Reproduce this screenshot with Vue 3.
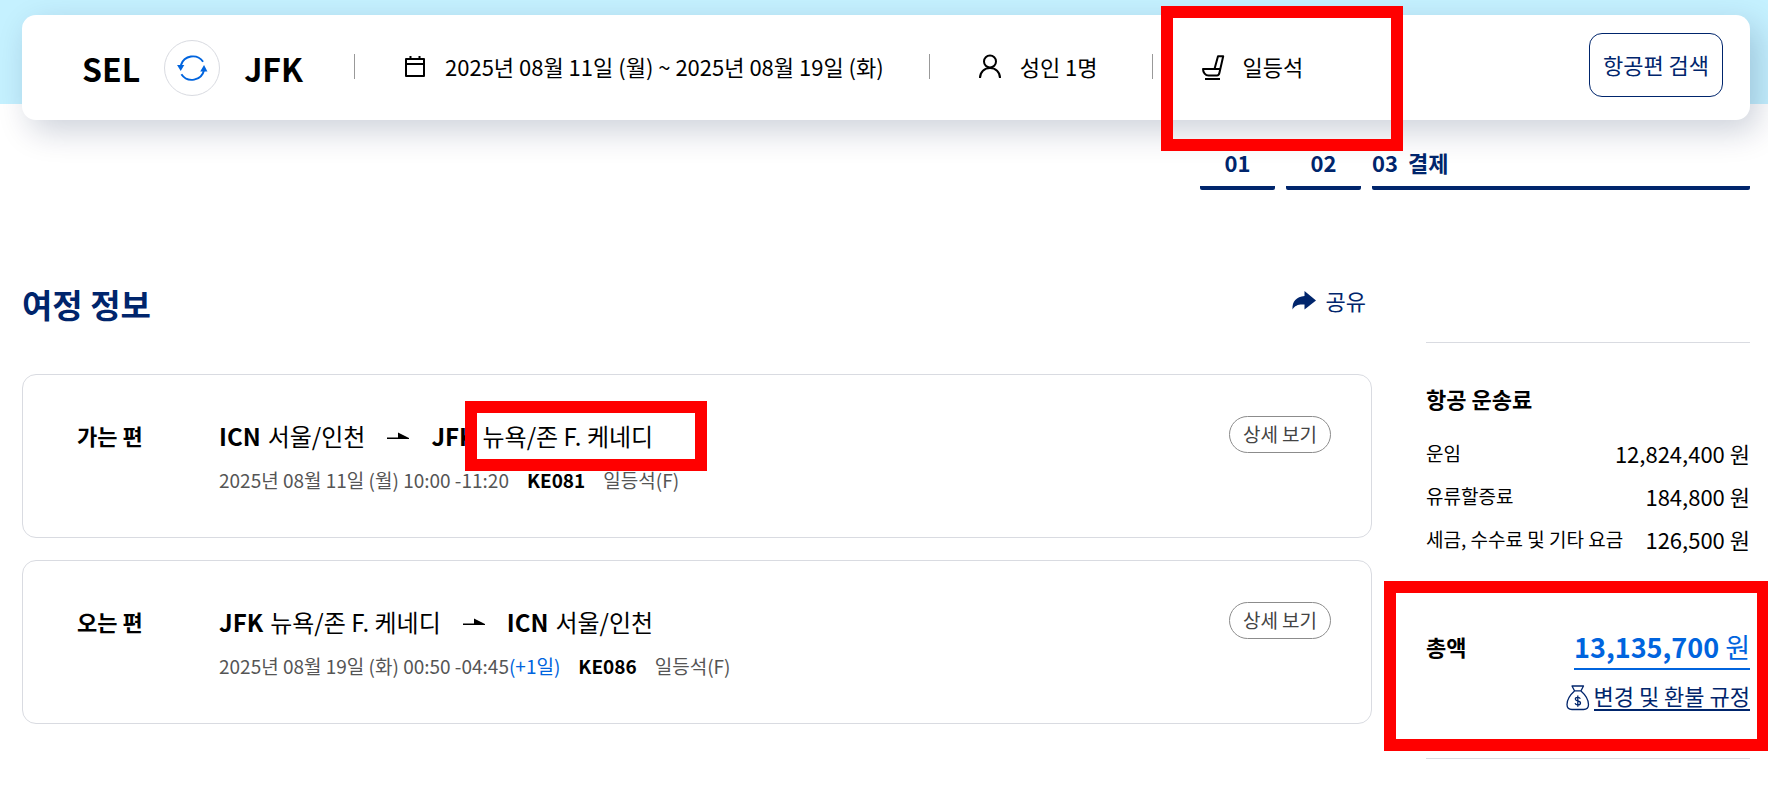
<template>
    <div class="page">
        <header class="hero">
            <div class="search-bar">
                <div class="route">
                    <span class="airport">SEL</span>
                    <button class="swap" type="button" aria-label="왕복">
                        <svg viewBox="0 0 56 56" fill="none">
                            <path d="M39.500 21.500A13 13 0 0 0 16.500 25" stroke="#0064de" stroke-width="2" />
                            <path d="M17 34.500A13 13 0 0 0 40.500 30" stroke="#0064de" stroke-width="2" />
                            <path d="M12.500 25h7.500l-3.700 6z" fill="#0064de" />
                            <path d="M36.500 31.500h7.500l-3.500-6.500z" fill="#0064de" />
                        </svg>
                    </button>
                    <span class="airport">JFK</span>
                </div>
                <div class="condition">
                    <svg class="icon" viewBox="0 0 24 24" fill="none" stroke="#000" stroke-width="2">
                        <path d="M3 4h18v17H3zM3 9h18M7.500 1V4M16.500 1V4" stroke-linejoin="round" />
                    </svg>
                    <span>2025년 08월 11일 (월) ~ 2025년 08월 19일 (화)</span>
                </div>
                <div class="condition passengers">
                    <svg class="icon" viewBox="0 0 24 24" fill="none" stroke="#000" stroke-width="2">
                        <circle cx="12" cy="6.500" r="6" />
                        <path d="M2 23c0-6 4.500-10 10-10s10 4 10 10" />
                    </svg>
                    <span>성인 1명</span>
                </div>
                <div class="condition">
                    <svg class="icon" viewBox="0 0 24 24" fill="none" stroke="#000" stroke-width="2">
                        <path d="M13.500 14L17 1.200h5.200L18.500 17.500c-.4 2-1 3-2.500 3H7.500C4.500 20.500 2 17.500 2 14h18" stroke-linejoin="round" />
                        <path d="M4 24h15" />
                    </svg>
                    <span>일등석</span>
                    <i class="mark mark-cabin"></i>
                </div>
                <button class="search-button" type="button">항공편 검색</button>
            </div>
        </header>

        <ol class="steps">
            <li>01</li>
            <li>02</li>
            <li class="current"><span>03</span><span>결제</span></li>
        </ol>

        <div class="content">
            <main>
                <div class="title-row">
                    <h1>여정 정보</h1>
                    <button class="share" type="button">
                        <svg viewBox="0 0 24 20" fill="#00256c">
                            <path d="M12.500 1L24 10.500L12.500 19.500V14.500C7 14 3 15 0.500 19.500C0 11.500 4.500 6.500 12.500 6z" />
                        </svg>
                        <span>공유</span>
                    </button>
                </div>

                <section v-for="trip in trips" :key="trip.flight" class="trip">
                    <h2>{{ trip.label }}</h2>
                    <div class="trip-info">
                        <p class="trip-route">
                            <span class="place">
                                <b>{{ trip.from.code }}</b>
                                <span>{{ trip.from.name }}</span>
                            </span>
                            <svg class="arrow" viewBox="0 0 22 8">
                                <path d="M0 5.500h11V0.500l11 5.500v1H0z" />
                            </svg>
                            <span class="place">
                                <b>{{ trip.to.code }}</b>
                                <span class="city">{{ trip.to.name }}<i v-if="trip.marked" class="mark mark-city"></i></span>
                            </span>
                        </p>
                        <p class="trip-detail">
                            <span>{{ trip.time }}<em v-if="trip.dayOffset">{{ trip.dayOffset }}</em></span>
                            <b>{{ trip.flight }}</b>
                            <span>일등석(F)</span>
                        </p>
                    </div>
                    <button class="detail-button" type="button">상세 보기</button>
                </section>
            </main>

            <aside class="fare">
                <h2>항공 운송료</h2>
                <dl>
                    <div v-for="row in fares" :key="row.label" class="fare-row">
                        <dt>{{ row.label }}</dt>
                        <dd>{{ row.amount }} 원</dd>
                    </div>
                </dl>
                <div class="total">
                    <h2>총액</h2>
                    <div class="total-links">
                        <a href="#" class="amount"><b>13,135,700</b> 원</a>
                        <div class="refund">
                            <svg viewBox="0 0 24 26" fill="none" stroke="#00256c" stroke-width="1.300">
                                <path d="M8.500 5.800L6 1h11.500l-2.500 4.800z" stroke-linejoin="round" />
                                <path d="M8.500 6C4 10 1 14.500 1 19.500c0 3.500 1.800 5 5 5h11.500c3.200 0 5-1.500 5-5C22.500 14.500 19.500 10 15 6" />
                                <path d="M14.300 13.800c-.4-1-1.300-1.500-2.500-1.500-1.500 0-2.500.7-2.500 1.800 0 2.700 5.200 1.100 5.200 3.900 0 1.200-1.100 1.900-2.700 1.900-1.400 0-2.400-.6-2.700-1.700M11.800 10.500v11.300" />
                            </svg>
                            <a href="#">변경 및 환불 규정</a>
                        </div>
                    </div>
                    <i class="mark mark-total"></i>
                </div>
            </aside>
        </div>
    </div>
</template>

<script setup>
const seoul = { code: 'ICN', name: '서울/인천' };
const newYork = { code: 'JFK', name: '뉴욕/존 F. 케네디' };

const trips = [
    {
        label: '가는 편',
        from: seoul,
        to: newYork,
        time: '2025년 08월 11일 (월) 10:00 -11:20',
        flight: 'KE081',
        marked: true
    },
    {
        label: '오는 편',
        from: newYork,
        to: seoul,
        time: '2025년 08월 19일 (화) 00:50 -04:45',
        dayOffset: '(+1일)',
        flight: 'KE086'
    }
];

const fares = [
    { label: '운임', amount: '12,824,400' },
    { label: '유류할증료', amount: '184,800' },
    { label: '세금, 수수료 및 기타 요금', amount: '126,500' }
];
</script>

<style>
body {
    margin: 0;
    background: #fff;
}
</style>

<style scoped>
.page {
    overflow: hidden;
    padding-bottom: 46px;
    font-family: "Noto Sans CJK KR", "Noto Sans", sans-serif;
    font-size: 22px;
    line-height: 32px;
    color: #000;
}

.page * {
    box-sizing: border-box;
}

h1,
h2,
p,
dl,
dd,
ol {
    margin: 0;
    padding: 0;
}

button {
    padding: 0;
    border: 0;
    background: none;
    font: inherit;
    white-space: nowrap;
    cursor: pointer;
}

svg {
    display: block;
    flex: none;
    overflow: visible;
}

.hero {
    padding: 15px 18px 0 22px;
    background: linear-gradient(#c5f1ff 104px, transparent 104px);
}

.search-bar {
    display: flex;
    height: 105px;
    padding-right: 27px;
    border-radius: 14px;
    background: #fff;
    box-shadow: 8px 11px 33px rgba(0, 25, 70, 0.2);
    white-space: nowrap;
}

.route {
    display: flex;
    align-items: center;
    gap: 24px;
    padding: 0 51px 0 60px;
}

.airport {
    font-size: 32px;
    font-weight: 700;
}

.swap {
    width: 56px;
    height: 56px;
    border: 1px solid #d9dbe1;
    border-radius: 50%;
}

.swap svg {
    width: 54px;
    height: 54px;
}

.condition {
    position: relative;
    display: flex;
    align-items: center;
    gap: 18px;
    padding: 0 45px 2px 0;
}

.condition::before {
    content: "";
    width: 1px;
    height: 25px;
    margin-right: 30px;
    background: #999;
}

.condition span {
    padding-bottom: 2px;
}

.passengers {
    padding-right: 54px;
}

.icon {
    width: 24px;
    height: 24px;
}

.search-button {
    align-self: center;
    width: 134px;
    height: 64px;
    margin: 0 0 5px auto;
    padding-bottom: 2px;
    border: 1px solid #00256c;
    border-radius: 13px;
    color: #00256c;
}

.steps {
    display: flex;
    justify-content: flex-end;
    gap: 11px;
    margin: 28px 18px 0 0;
    list-style: none;
    font-weight: 700;
    line-height: 28px;
    color: #00256c;
}

.steps li {
    width: 75px;
    height: 42px;
    border-bottom: 4px solid #00256c;
    border-radius: 2px;
    text-align: center;
}

.steps .current {
    display: flex;
    gap: 10px;
    width: 378px;
}

.content {
    display: grid;
    grid-template-columns: minmax(0, 1fr) 324px;
    gap: 54px;
    padding: 91px 18px 0 22px;
}

.title-row {
    display: flex;
    justify-content: space-between;
    height: 93px;
    padding-right: 6px;
    color: #00256c;
}

h1 {
    font-size: 33px;
    line-height: 46px;
}

h2 {
    font-size: 22px;
    line-height: 30px;
}

.share {
    display: flex;
    align-items: center;
    gap: 10px;
    height: 38px;
    color: #00256c;
}

.share svg {
    width: 24px;
    height: 20px;
}

.trip {
    display: flex;
    align-items: flex-start;
    height: 164px;
    padding: 41px 40px 0 54px;
    border: 1px solid #d9dbe1;
    border-radius: 14px;
}

.trip + .trip {
    margin-top: 22px;
}

.trip h2 {
    width: 142px;
    padding-top: 4px;
}

.trip-info {
    flex: 1;
}

.trip-route {
    display: flex;
    align-items: center;
    font-size: 24px;
    line-height: 40px;
}

.arrow {
    width: 22px;
    height: 8px;
    margin: 0 22px;
}

.place {
    display: flex;
    gap: 7px;
}

.city {
    position: relative;
}

.trip-detail {
    display: flex;
    gap: 18px;
    padding-top: 8px;
    font-size: 19px;
    color: #555;
}

.trip-detail b {
    color: #000;
}

.trip-detail em {
    font-style: normal;
    color: #0064de;
}

.detail-button {
    width: 102px;
    height: 37px;
    padding-bottom: 1px;
    border: 1px solid #8c8c8c;
    border-radius: 19px;
    font-size: 19px;
    color: #444;
}

.fare {
    align-self: start;
    height: 417px;
    margin-top: 61px;
    padding-top: 40px;
    border: 1px solid #d9dbe1;
    border-width: 1px 0;
}

.fare dl {
    display: grid;
    gap: 11px;
    padding-top: 24px;
}

.fare-row {
    display: flex;
    justify-content: space-between;
    white-space: nowrap;
}

.fare dt {
    font-size: 19px;
}

.total {
    position: relative;
    display: flex;
    justify-content: space-between;
    margin-top: 76px;
}

.total-links {
    display: flex;
    flex-direction: column;
    align-items: flex-end;
}

.amount {
    height: 39px;
    border-bottom: 2px solid #0064de;
    font-size: 27px;
    color: #0064de;
    text-decoration: none;
}

.refund {
    display: flex;
    align-items: center;
    gap: 4px;
    padding-top: 11px;
}

.refund svg {
    width: 24px;
    height: 26px;
    margin-top: 4px;
}

.refund a {
    height: 30px;
    border-bottom: 2px solid #00256c;
    line-height: 28px;
    color: #00256c;
    text-decoration: none;
}

/* red highlight frames */
.mark {
    position: absolute;
    z-index: 1;
    width: 242px;
    border: 12px solid #f00;
    pointer-events: none;
}

.mark-cabin {
    top: -9px;
    left: 9px;
    height: 145px;
}

.mark-city {
    top: -15px;
    left: -18px;
    height: 70px;
}

.mark-total {
    top: -50px;
    right: -19px;
    width: 385px;
    height: 170px;
}
</style>
